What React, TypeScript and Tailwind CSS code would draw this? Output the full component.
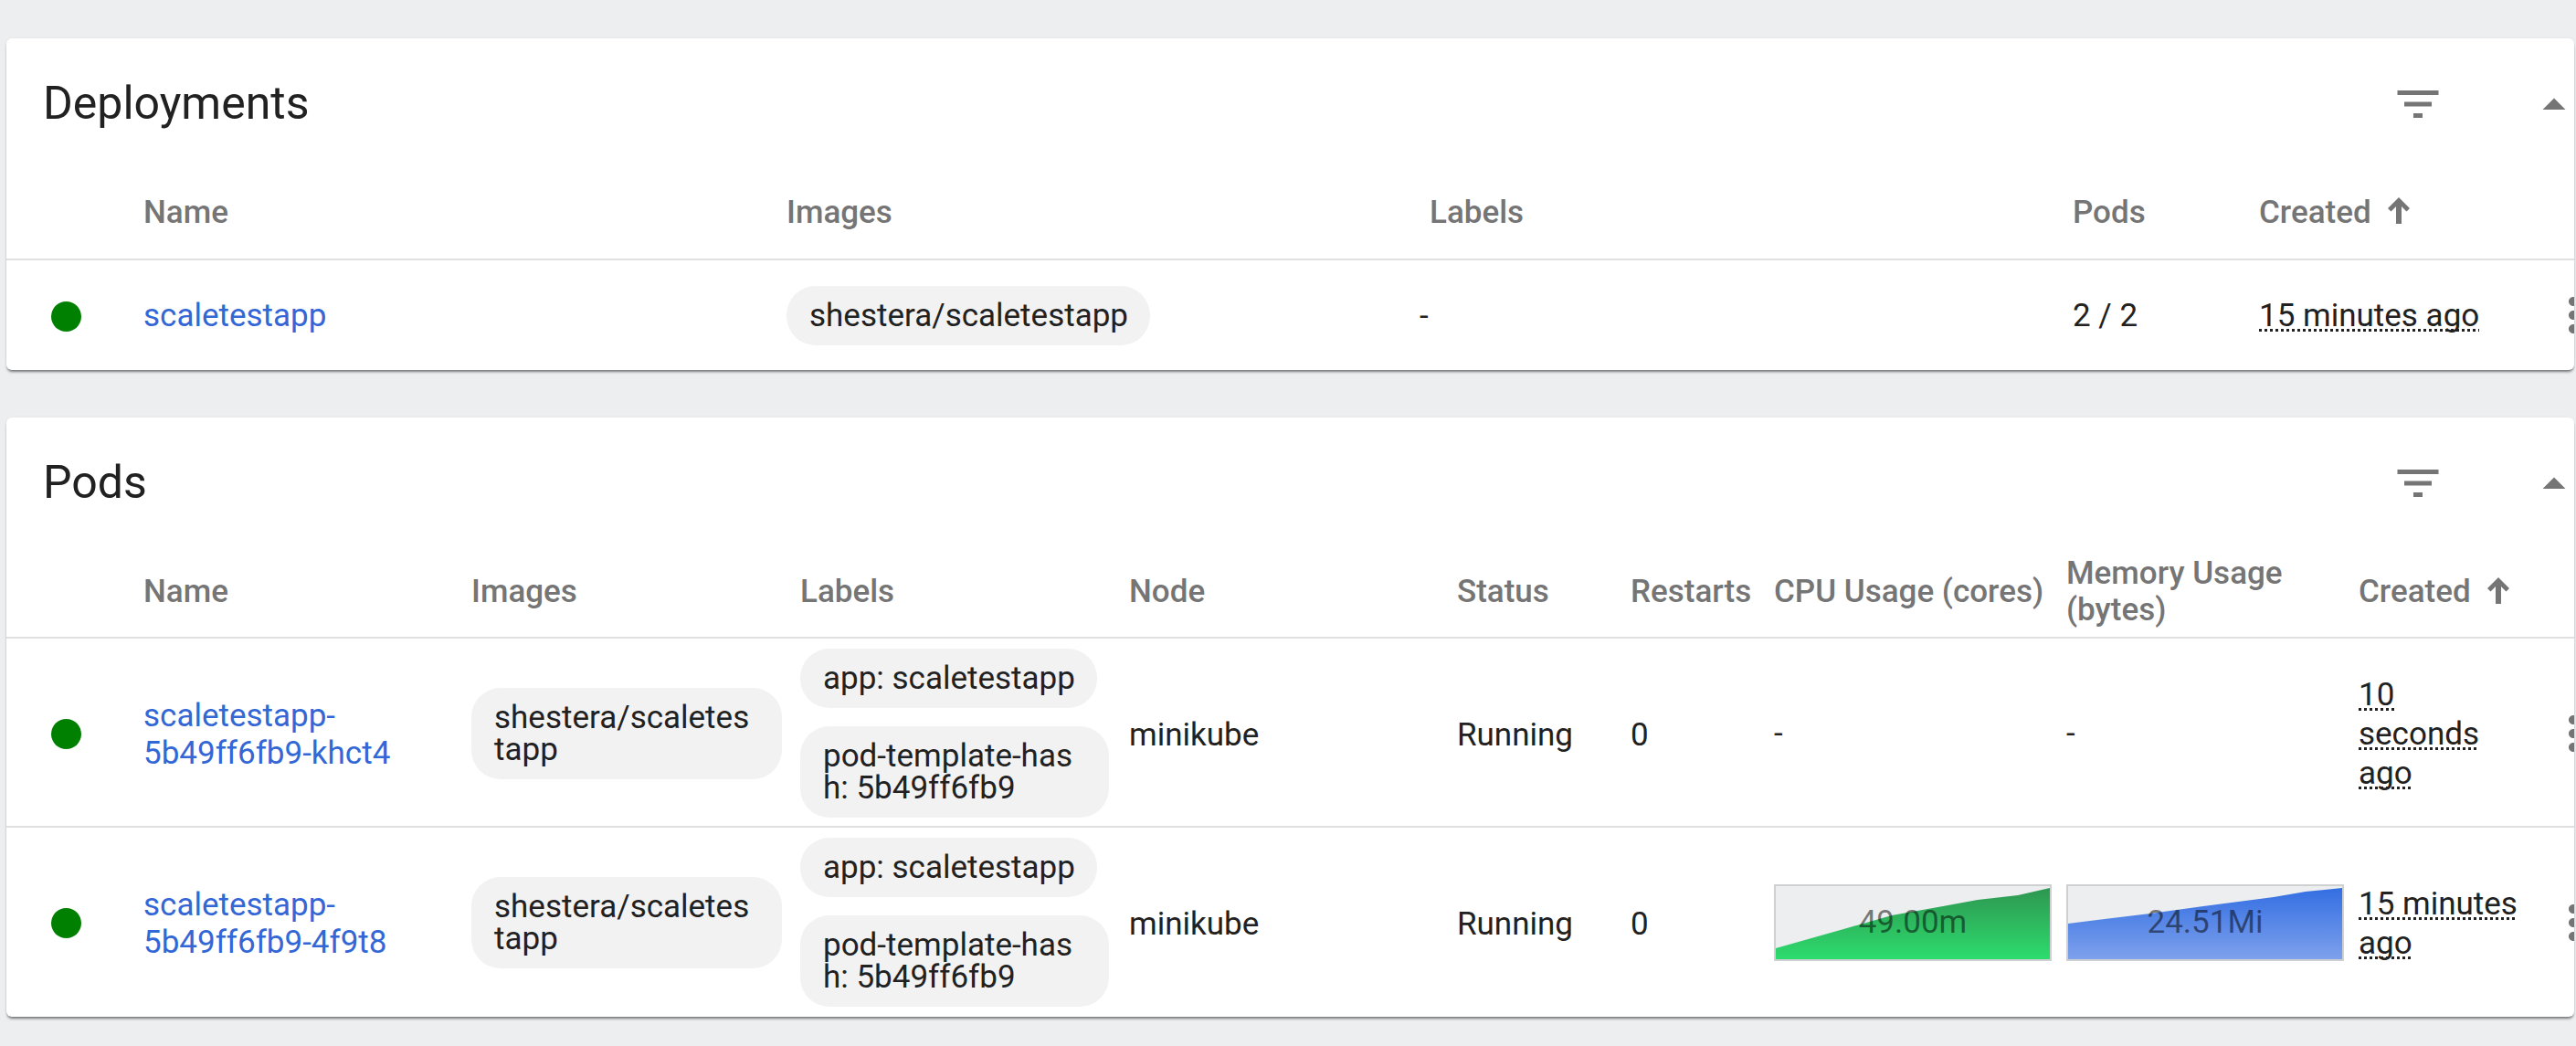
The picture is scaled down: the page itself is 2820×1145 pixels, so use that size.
const FILTER = "M10 18h4v-2h-4v2zM3 6v2h18V6H3zm3 7h12v-2H6v2z";
const MORE = "M12 8c1.1 0 2-.9 2-2s-.9-2-2-2-2 .9-2 2 .9 2 2 2zm0 2c-1.1 0-2 .9-2 2s.9 2 2 2 2-.9 2-2-.9-2-2-2zm0 6c-1.1 0-2 .9-2 2s.9 2 2 2 2-.9 2-2-.9-2-2-2z";

function Icon({ d, className }: { d: string; className: string }) {
  return (
    <svg viewBox="0 0 24 24" className={className} fill="#757575">
      <path d={d} />
    </svg>
  );
}

function CardTitle({ title }: { title: string }) {
  return (
    <div className="flex h-[140px] items-center pl-[40px]">
      <h2 className="flex-1 translate-y-[1px] text-[50px] leading-[60px] font-normal text-[#212121]">{title}</h2>
      <Icon d={FILTER} className="mr-[89px] h-[60px] w-[60px] shrink-0 translate-y-[2px]" />
      <div className="h-[60px] w-[52px] shrink-0 translate-y-[3px] overflow-hidden">
        <svg viewBox="0 0 24 24" className="h-[60px] w-[60px]" fill="#757575">
          <path d="M7 14l5-5 5 5z" />
        </svg>
      </div>
    </div>
  );
}

function HeaderCell({ children, sorted }: { children: React.ReactNode; sorted?: boolean }) {
  return (
    <div className="flex items-center text-[35px] leading-[40px] font-medium text-[#757575]">
      <span>{children}</span>
      {sorted && (
        <svg viewBox="0 0 24 29" className="ml-[18px] h-[29px] w-[24px] -translate-y-[2px]" fill="#757575">
          <path d="M12 0L24 12L20.5 15.5L15 10V29H9V10L3.5 15.5L0 12Z" />
        </svg>
      )}
    </div>
  );
}

function Dot() {
  return <div className="ml-[49px] h-[33px] w-[33px] translate-y-[1px] rounded-full bg-[#008000]" />;
}

function Chip({ children, className }: { children: React.ReactNode; className: string }) {
  return (
    <div className={`rounded-[32px] bg-[#f2f2f2] px-[25px] py-[15px] text-[35px] leading-[35px] whitespace-nowrap text-[#212121] ${className}`}>
      {children}
    </div>
  );
}

function Time({ children }: { children: React.ReactNode }) {
  return (
    <span className="underline decoration-[#212121] decoration-dotted decoration-[3px] underline-offset-[3px] [text-decoration-skip-ink:none]">
      {children}
    </span>
  );
}

function Kebab() {
  return (
    <div className="h-[60px] w-[31px] overflow-hidden">
      <Icon d={MORE} className="h-[60px] w-[60px]" />
    </div>
  );
}

function Chart({ points, from, to, label, labelColor, id }: { points: string; from: string; to: string; label: string; labelColor: string; id: string }) {
  return (
    <div className="relative h-[84px] w-[304px] border-2 border-[#cfd0d2] bg-[#eceef0]">
      <svg viewBox="0 0 300 80" preserveAspectRatio="none" className="h-full w-full">
        <defs>
          <linearGradient id={id} x1="0" y1="0" x2="0" y2="1">
            <stop offset="0" stopColor={from} />
            <stop offset="1" stopColor={to} />
          </linearGradient>
        </defs>
        <polygon points={points} fill={`url(#${id})`} />
      </svg>
      <div className={`absolute inset-0 flex items-center justify-center text-[35px] ${labelColor}`}>{label}</div>
    </div>
  );
}

const deployCols = "grid-cols-[150px_704px_704px_704px_204px_1fr]";
const podCols = "grid-cols-[150px_359px_360px_360px_359px_190px_157px_320px_320px_205px_1fr]";

function PodRow({ suffix, time, cpu, mem, last }: { suffix: string; time: React.ReactNode; cpu: React.ReactNode; mem: React.ReactNode; last?: boolean }) {
  return (
    <div className={`grid ${podCols} h-[207px] items-center text-[35px] leading-[43px] text-[#212121] ${last ? "" : "border-b-2 border-[#e0e0e0] pt-[2px]"}`}>
      <Dot />
      <a className="pt-[2px] leading-[41px] text-[#3367d6]">
        scaletestapp-
        <br />
        5b49ff6fb9-{suffix}
      </a>
      <Chip className="w-[340px]">
        shestera/scaletes
        <br />
        tapp
      </Chip>
      <div className="flex flex-col items-start gap-[20px]">
        <Chip className="w-[325px]">app: scaletestapp</Chip>
        <Chip className="w-[338px]">
          pod-template-has
          <br />
          h: 5b49ff6fb9
        </Chip>
      </div>
      <div className="pt-[3px]">minikube</div>
      <div className="pt-[3px]">Running</div>
      <div className="pt-[3px]">0</div>
      <div>{cpu}</div>
      <div>{mem}</div>
      <div className="pt-[2px]">{time}</div>
      <Kebab />
    </div>
  );
}

export default function App() {
  return (
    <div className="flex min-h-screen flex-col gap-[52px] overflow-hidden bg-[#eceef0] pt-[42px] pr-[2px] pl-[7px] font-['Roboto',sans-serif]">
      <section className="overflow-hidden rounded-[6px] bg-white shadow-[0_3px_3px_-1px_rgba(0,0,0,0.5),0_0_3px_rgba(0,0,0,0.06)]">
        <CardTitle title="Deployments" />
        <div className={`grid ${deployCols} h-[103px] items-center border-b-2 border-[#e0e0e0]`}>
          <div />
          <HeaderCell>Name</HeaderCell>
          <HeaderCell>Images</HeaderCell>
          <HeaderCell>Labels</HeaderCell>
          <HeaderCell>Pods</HeaderCell>
          <HeaderCell sorted>Created</HeaderCell>
        </div>
        <div className="grid h-[120px] grid-cols-[150px_704px_704px_704px_204px_1fr_31px] items-center text-[35px] leading-[43px] text-[#212121]">
          <Dot />
          <a className="text-[#3367d6]">scaletestapp</a>
          <Chip className="w-[398px]">shestera/scaletestapp</Chip>
          <div className="-ml-[11px]">-</div>
          <div>2 / 2</div>
          <div>
            <Time>15 minutes ago</Time>
          </div>
          <Kebab />
        </div>
      </section>

      <section className="overflow-hidden rounded-[6px] bg-white shadow-[0_3px_3px_-1px_rgba(0,0,0,0.5),0_0_3px_rgba(0,0,0,0.06)]">
        <CardTitle title="Pods" />
        <div className={`grid ${podCols} h-[102px] items-center border-b-2 border-[#e0e0e0] pt-[2px]`}>
          <div />
          <HeaderCell>Name</HeaderCell>
          <HeaderCell>Images</HeaderCell>
          <HeaderCell>Labels</HeaderCell>
          <HeaderCell>Node</HeaderCell>
          <HeaderCell>Status</HeaderCell>
          <HeaderCell>Restarts</HeaderCell>
          <HeaderCell>CPU Usage (cores)</HeaderCell>
          <HeaderCell>
            Memory Usage
            <br />
            (bytes)
          </HeaderCell>
          <HeaderCell sorted>Created</HeaderCell>
          <div />
        </div>
        <PodRow
          suffix="khct4"
          cpu="-"
          mem="-"
          time={
            <>
              <Time>10</Time>
              <br />
              <Time>seconds</Time>
              <br />
              <Time>ago</Time>
            </>
          }
        />
        <PodRow
          last
          suffix="4f9t8"
          cpu={
            <Chart
              id="cpu"
              points="0,68 92,42 127,32 183,22 221,15 265,10 300,2 300,80 0,80"
              from="#2e9650"
              to="#2ddc6e"
              label="49.00m"
              labelColor="text-[#00000080]"
            />
          }
          mem={
            <Chart
              id="mem"
              points="0,41 40,36 90,30 148,22 225,12 260,6 300,2 300,80 0,80"
              from="#336ee2"
              to="#7ea1ec"
              label="24.51Mi"
              labelColor="text-[#00000080]"
            />
          }
          time={
            <>
              <Time>15 minutes</Time>
              <br />
              <Time>ago</Time>
            </>
          }
        />
      </section>
    </div>
  );
}
